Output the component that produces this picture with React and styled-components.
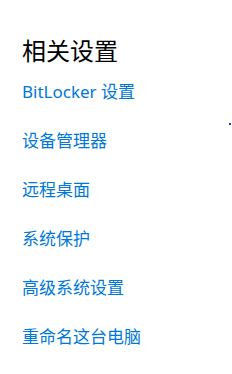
import React from 'react';
import styled, { createGlobalStyle } from 'styled-components';

const GlobalStyle = createGlobalStyle`
  * {
    margin: 0;
    padding: 0;
    box-sizing: border-box;
  }

  body {
    font-family: 'Noto Sans', 'Noto Sans CJK SC', sans-serif;
    background: #ffffff;
    color: #000000;
    overflow: hidden;
  }
`;

const Panel = styled.div`
  position: relative;
  width: 232px;
  height: 374px;
  padding: 35px 0 0 22px;
  display: flex;
  flex-direction: column;
`;

const Title = styled.h2`
  font-size: 24px;
  font-weight: 400;
  line-height: 32px;
  margin-bottom: 15px;
`;

const LinkList = styled.div`
  display: flex;
  flex-direction: column;
  gap: 29px;
`;

const Link = styled.a`
  font-size: 17px;
  line-height: 20px;
  color: #0078d7;
  text-decoration: none;
  cursor: pointer;
`;

const Dot = styled.span`
  position: absolute;
  left: 229px;
  top: 123px;
  width: 2px;
  height: 2px;
  background: #2030c0;
`;

const links = [
  'BitLocker 设置',
  '设备管理器',
  '远程桌面',
  '系统保护',
  '高级系统设置',
  '重命名这台电脑',
];

function App() {
  return (
    <>
      <GlobalStyle />
      <Panel>
        <Title>相关设置</Title>
        <LinkList>
          {links.map((label) => (
            <Link key={label}>{label}</Link>
          ))}
        </LinkList>
        <Dot />
      </Panel>
    </>
  );
}

export default App;
